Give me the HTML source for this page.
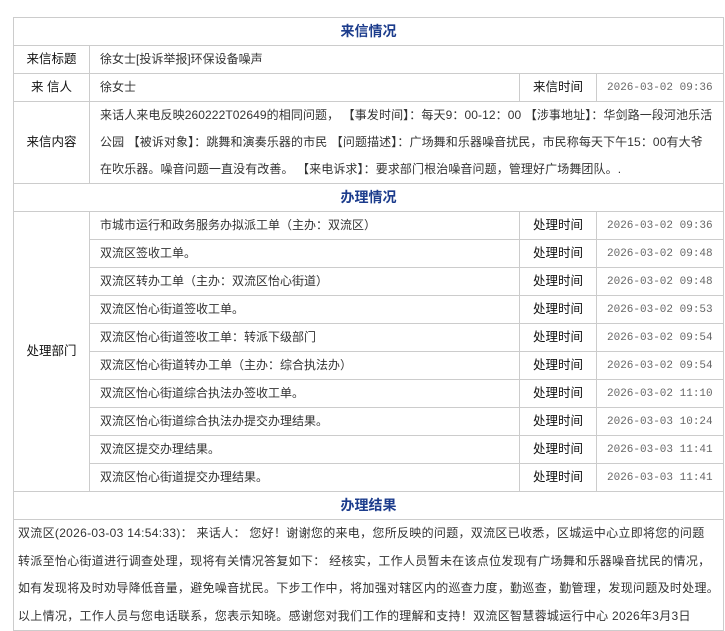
<!DOCTYPE html>
<html><head><meta charset="utf-8"><style>
body{margin:0;background:#fff;font-family:"Liberation Sans","Noto Sans CJK SC",sans-serif;font-size:12px;color:#333}
table{position:absolute;left:13px;top:17px;width:710px;border-collapse:collapse;table-layout:fixed}
td{border:1px solid #ccc;height:27px;padding:0 0 0 10px;line-height:27px;white-space:nowrap;overflow:hidden;vertical-align:middle}
td.l{text-align:center;padding:0;color:#111;font-size:12.5px}
td.h{text-align:center;padding:0;color:#1c3c8c;font-weight:bold;font-size:14px}
td.t{color:#666;font-size:11px;font-family:"Liberation Mono","Noto Sans CJK SC",monospace;padding:2px 0 0 10px;height:25px;line-height:25px}
td.w{line-height:27px;letter-spacing:0.1px}
td.r{line-height:27.5px;padding:0 0 0 4px;height:108px;letter-spacing:0.3px}
</style></head><body>
<table>
<colgroup><col style="width:76px"><col style="width:430px"><col style="width:77px"><col style="width:127px"></colgroup>
<tr><td class="h" colspan="4">来信情况</td></tr>
<tr><td class="l">来信标题</td><td colspan="3">徐女士[投诉举报]环保设备噪声</td></tr>
<tr><td class="l">来 信人</td><td>徐女士</td><td class="l">来信时间</td><td class="t">2026-03-02 09:36</td></tr>
<tr><td class="l" style="height:81px">来信内容</td><td colspan="3" class="w">来话人来电反映260222T02649的相同问题， 【事发时间】：每天9：00-12：00 【涉事地址】：华剑路一段河池乐活<br>公园 【被诉对象】：跳舞和演奏乐器的市民 【问题描述】：广场舞和乐器噪音扰民，市民称每天下午15：00有大爷<br>在吹乐器。噪音问题一直没有改善。 【来电诉求】：要求部门根治噪音问题，管理好广场舞团队。.</td></tr>
<tr><td class="h" colspan="4">办理情况</td></tr>
<tr><td class="l" rowspan="10">处理部门</td><td>市城市运行和政务服务办拟派工单（主办：双流区）</td><td class="l">处理时间</td><td class="t">2026-03-02 09:36</td></tr>
<tr><td>双流区签收工单。</td><td class="l">处理时间</td><td class="t">2026-03-02 09:48</td></tr>
<tr><td>双流区转办工单（主办：双流区怡心街道）</td><td class="l">处理时间</td><td class="t">2026-03-02 09:48</td></tr>
<tr><td>双流区怡心街道签收工单。</td><td class="l">处理时间</td><td class="t">2026-03-02 09:53</td></tr>
<tr><td>双流区怡心街道签收工单：转派下级部门</td><td class="l">处理时间</td><td class="t">2026-03-02 09:54</td></tr>
<tr><td>双流区怡心街道转办工单（主办：综合执法办）</td><td class="l">处理时间</td><td class="t">2026-03-02 09:54</td></tr>
<tr><td>双流区怡心街道综合执法办签收工单。</td><td class="l">处理时间</td><td class="t">2026-03-02 11:10</td></tr>
<tr><td>双流区怡心街道综合执法办提交办理结果。</td><td class="l">处理时间</td><td class="t">2026-03-03 10:24</td></tr>
<tr><td>双流区提交办理结果。</td><td class="l">处理时间</td><td class="t">2026-03-03 11:41</td></tr>
<tr><td>双流区怡心街道提交办理结果。</td><td class="l">处理时间</td><td class="t">2026-03-03 11:41</td></tr>
<tr><td class="h" colspan="4">办理结果</td></tr>
<tr><td class="r" colspan="4">双流区(2026-03-03 14:54:33)： 来话人： 您好！谢谢您的来电，您所反映的问题，双流区已收悉，区城运中心立即将您的问题<br>转派至怡心街道进行调查处理，现将有关情况答复如下： 经核实，工作人员暂未在该点位发现有广场舞和乐器噪音扰民的情况，<br>如有发现将及时劝导降低音量，避免噪音扰民。下步工作中，将加强对辖区内的巡查力度，勤巡查，勤管理，发现问题及时处理。<br>以上情况，工作人员与您电话联系，您表示知晓。感谢您对我们工作的理解和支持！双流区智慧蓉城运行中心 2026年3月3日</td></tr>
</table>
</body></html>
